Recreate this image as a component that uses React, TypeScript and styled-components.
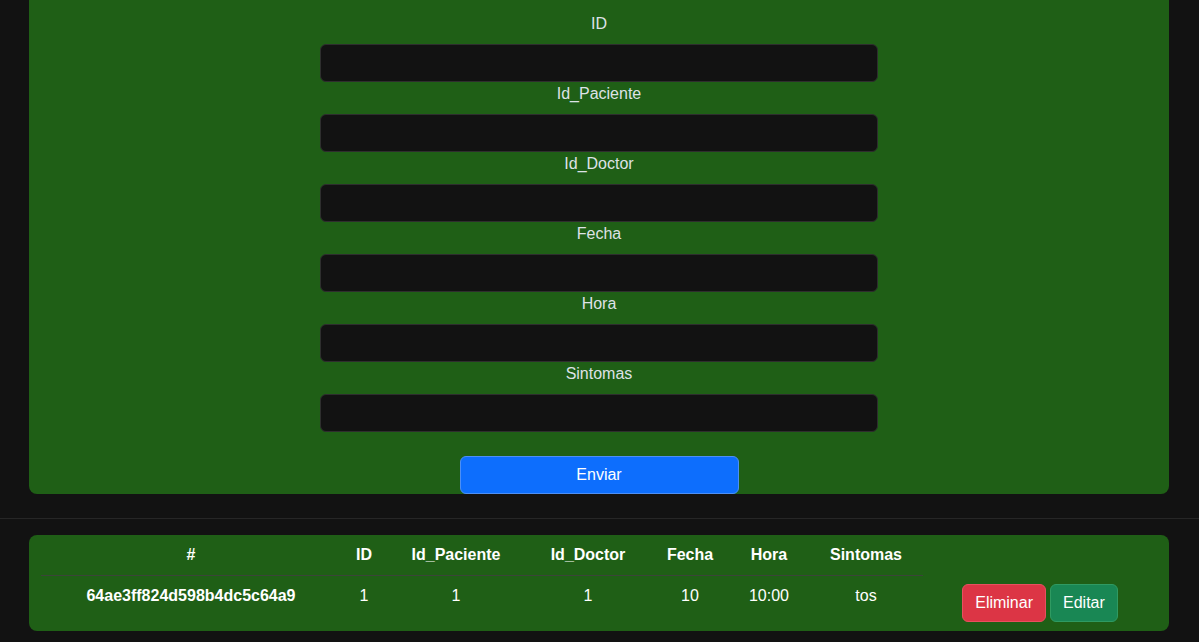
import React from "react";
import styled, { createGlobalStyle } from "styled-components";

const GlobalStyle = createGlobalStyle`
  html, body {
    margin: 0;
    padding: 0;
    background: #121212;
    color: #dee2e6;
    font-family: "Liberation Sans", Arial, sans-serif;
    font-size: 16px;
    line-height: 24px;
  }
  * { box-sizing: border-box; }
`;

const Container = styled.div`
  width: 1140px;
  margin-left: max(0px, calc((100vw - 1141px) / 2));
`;

const FormPanel = styled.div`
  background: #1f5f16;
  border-radius: 0 0 8px 8px;
  padding-top: 12px;
  display: flex;
  justify-content: center;
`;

const Form = styled.form`
  width: 558px;
  display: flex;
  flex-direction: column;
  align-items: center;
`;

const Label = styled.label`
  display: block;
  width: 100%;
  text-align: center;
  line-height: 24px;
  margin-bottom: 8px;
  color: #dee2e6;
`;

const Input = styled.input`
  display: block;
  width: 100%;
  height: 38px;
  background: #121212;
  border: 1px solid #2e2e2e;
  border-radius: 6px;
  color: #dee2e6;
  font: inherit;
  padding: 6px 12px;
  outline: none;
`;

const Submit = styled.button`
  margin-top: 24px;
  width: 279px;
  height: 38px;
  background: #0d6efd;
  border: 1px solid #4d8ff5;
  border-radius: 6px;
  color: #fff;
  font: inherit;
  line-height: 24px;
`;

const Divider = styled.div`
  border-top: 1px solid #262626;
  margin: 24px 0 16px;
`;

const TablePanel = styled.div`
  background: #1f5f16;
  border-radius: 8px;
  padding: 0 12px 15px;
  display: flex;
  align-items: flex-end;
`;

const Table = styled.table`
  width: 882px;
  border-collapse: collapse;
  color: #fff;
`;

const Th = styled.th<{ $w: number }>`
  width: ${(p) => p.$w}px;
  padding: 8px 0;
  font-weight: bold;
  text-align: center;
  line-height: 24px;
  border-bottom: 1px solid #3b4439;
`;

const Td = styled.td`
  padding: 8px 0;
  text-align: center;
  line-height: 24px;
`;

const IdTd = styled(Td)`
  font-weight: bold;
`;

const Actions = styled.div`
  flex: 1;
  display: flex;
  justify-content: center;
  gap: 4px;
  margin-bottom: -6px;
`;

const ActionButton = styled.button<{ $variant: "danger" | "success" }>`
  height: 38px;
  padding: 6px 12px;
  border-radius: 6px;
  font: inherit;
  line-height: 24px;
  color: #fff;
  background: ${(p) => (p.$variant === "danger" ? "#dc3545" : "#198754")};
  border: 1px solid ${(p) => (p.$variant === "danger" ? "#e8505f" : "#2f9a62")};
`;

const fields = ["ID", "Id_Paciente", "Id_Doctor", "Fecha", "Hora", "Sintomas"];

const columns: { name: string; w: number }[] = [
  { name: "#", w: 300 },
  { name: "ID", w: 46 },
  { name: "Id_Paciente", w: 138 },
  { name: "Id_Doctor", w: 126 },
  { name: "Fecha", w: 78 },
  { name: "Hora", w: 80 },
  { name: "Sintomas", w: 114 },
];

export default function App() {
  return (
    <>
      <GlobalStyle />
      <Container>
        <FormPanel>
          <Form onSubmit={(e) => e.preventDefault()}>
            {fields.map((f) => (
              <React.Fragment key={f}>
                <Label>{f}</Label>
                <Input type="text" />
              </React.Fragment>
            ))}
            <Submit type="submit">Enviar</Submit>
          </Form>
        </FormPanel>
      </Container>
      <Divider />
      <Container>
        <TablePanel>
          <Table>
            <thead>
              <tr>
                {columns.map((c) => (
                  <Th key={c.name} $w={c.w}>
                    {c.name}
                  </Th>
                ))}
              </tr>
            </thead>
            <tbody>
              <tr>
                <IdTd>64ae3ff824d598b4dc5c64a9</IdTd>
                <Td>1</Td>
                <Td>1</Td>
                <Td>1</Td>
                <Td>10</Td>
                <Td>10:00</Td>
                <Td>tos</Td>
              </tr>
            </tbody>
          </Table>
          <Actions>
            <ActionButton $variant="danger">Eliminar</ActionButton>
            <ActionButton $variant="success">Editar</ActionButton>
          </Actions>
        </TablePanel>
      </Container>
    </>
  );
}
